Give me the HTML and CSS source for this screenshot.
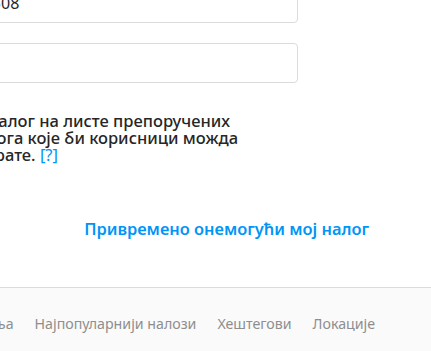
FILE: index.html
```html
<!DOCTYPE html>
<html lang="sr">
<head>
    <meta charset="UTF-8">
    <meta name="viewport" content="width=device-width, initial-scale=1.0">
    <title>Уреди профил</title>
    <link rel="stylesheet" href="styles.css">
</head>
<body>
    <main class="settings">
        <div class="field-row">
            <input type="text" class="text-input" value="+381 64 1234508">
        </div>
        <div class="field-row">
            <input type="text" class="text-input" value="">
        </div>
        <div class="check-row">
            <input type="checkbox" class="check" checked>
            <p class="check-text">налог на листе препоручених налога које би корисници можда запрате. <a href="#" class="help">[?]</a></p>
        </div>
        <div class="actions">
            <a href="#" class="disable-link">Привремено онемогући мој налог</a>
        </div>
    </main>
    <footer class="footer">
        <nav class="footer-links">
            <a href="#">Информације</a>
            <a href="#">Подршка</a>
            <a href="#">Штампа</a>
            <a href="#">API</a>
            <a href="#">Послови</a>
            <a href="#">Приватност</a>
            <a href="#">Услови коришћења</a>
            <a href="#">Најпопуларнији налози</a>
            <a href="#">Хештегови</a>
            <a href="#">Локације</a>
        </nav>
    </footer>
</body>
</html>
```

FILE: styles.css
```css
* { margin: 0; padding: 0; box-sizing: border-box; }
html, body { width: 431px; height: 351px; overflow: hidden; }
body {
    font-family: 'Noto Sans', 'Open Sans', sans-serif;
    background: white; color: #262626;
}
.settings { margin: -17px 0 0 -120px; width: 489px; }
.field-row { width: 418px; }
.field-row + .field-row { margin-top: 20px; }
.text-input {
    display: block; width: 100%; height: 40px; padding: 0 10px 0 11px;
    border: 1px solid #dbdbdb; border-radius: 4px; background: white;
    font-family: inherit; font-size: 16px; color: #262626; outline: none;
}
.check-row { display: flex; align-items: flex-start; gap: 10px; width: 418px; margin-top: 29px; padding-left: 64px; }
.check { width: 13px; height: 13px; margin-top: 3px; flex-shrink: 0; }
.check-text {
    font-size: 16.5px; line-height: 17px; font-weight: 500; text-indent: 21px;
    margin-right: 16px;
}
.help { color: #0095f6; text-decoration: none; font-weight: 400; }
.actions { display: flex; justify-content: flex-end; margin-top: 57px; }
.disable-link { color: #0095f6; font-size: 16.4px; line-height: 18px; font-weight: 600; text-decoration: none; }
.footer { margin-top: 49px; border-top: 1px solid #dbdbdb; background: #fafafa; height: 100px; padding-top: 27px; }
.footer-links {
    display: flex; justify-content: flex-end; gap: 21px; padding-right: 56px;
    font-size: 14.2px; line-height: 18px; white-space: nowrap;
}
.footer-links a { color: #8e8e8e; text-decoration: none; flex-shrink: 0; }
```
